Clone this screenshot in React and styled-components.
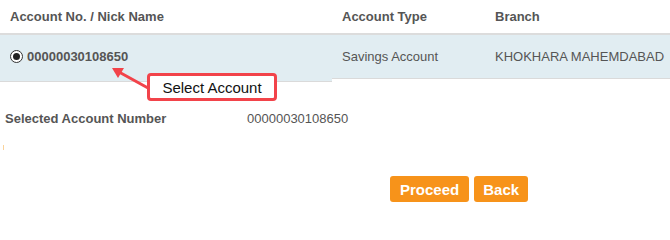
import * as React from 'react';
import styled, { createGlobalStyle } from 'styled-components';

const GlobalStyle = createGlobalStyle`
  body {
    margin: 0;
    background: #fff;
    font-family: "Liberation Sans", Arial, sans-serif;
  }
`;

const Page = styled.div`
  position: relative;
  width: 670px;
  height: 218px;
  overflow: hidden;
  color: #555;
  font-size: 13px;
`;

const Grid = styled.div`
  display: grid;
  grid-template-columns: 332px 153px 1fr;
`;

const HeadCell = styled.div`
  height: 33px;
  display: flex;
  align-items: center;
  padding-left: 10px;
  font-weight: bold;
  color: #555;
  border-bottom: 2px solid #dcdcdc;
`;

const BodyCell = styled.div`
  height: 43px;
  display: flex;
  align-items: center;
  padding-left: 10px;
  padding-bottom: ${(p) => (p.$raised ? '3px' : '0')};
  background: #e1edf2;
  border-bottom: 1px solid #dadada;
  font-weight: ${(p) => (p.$bold ? 'bold' : 'normal')};
  white-space: nowrap;
  overflow: hidden;
`;

const Radio = styled.span`
  width: 13px;
  height: 13px;
  border: 1px solid #333;
  border-radius: 50%;
  background: #fff;
  margin-right: 4px;
  display: inline-flex;
  align-items: center;
  justify-content: center;
  box-sizing: border-box;

  &::after {
    content: '';
    width: 7px;
    height: 7px;
    border-radius: 50%;
    background: #222;
  }
`;

const SummaryRow = styled.div`
  display: grid;
  grid-template-columns: 242px 1fr;
  padding: 29px 0 0 5px;
  line-height: 16px;
`;

const Label = styled.div`
  font-weight: bold;
`;

const Marker = styled.div`
  width: 1px;
  height: 5px;
  margin: 18px 0 0 3px;
  background: #fbd39a;
`;

const Actions = styled.div`
  display: flex;
  gap: 5px;
  padding: 26px 0 0 390px;
`;

const Button = styled.button`
  height: 26px;
  padding: 0 ${(p) => p.$pad || 10}px;
  border: none;
  border-radius: 3px;
  background: #f7931a;
  color: #fff;
  font-family: "Liberation Sans", Arial, sans-serif;
  font-weight: bold;
  font-size: 15px;
  cursor: pointer;
`;

const Callout = styled.div`
  position: absolute;
  left: 147px;
  top: 73px;
  width: 130px;
  height: 28px;
  box-sizing: border-box;
  border: 3px solid #f2434a;
  border-radius: 4px;
  background: #fff;
  color: #111;
  font-size: 15px;
  display: flex;
  align-items: center;
  justify-content: center;
`;

const Arrow = styled.svg`
  position: absolute;
  left: 108px;
  top: 62px;
`;

export default function App() {
  return (
    <Page>
      <GlobalStyle />
      <Grid>
        <HeadCell>Account No. / Nick Name</HeadCell>
        <HeadCell>Account Type</HeadCell>
        <HeadCell>Branch</HeadCell>
        <BodyCell $bold $raised>
          <Radio />
          00000030108650
        </BodyCell>
        <BodyCell>Savings Account</BodyCell>
        <BodyCell>KHOKHARA MAHEMDABAD</BodyCell>
      </Grid>
      <SummaryRow>
        <Label>Selected Account Number</Label>
        <div>00000030108650</div>
      </SummaryRow>
      <Marker />
      <Actions>
        <Button $pad={10}>Proceed</Button>
        <Button $pad={9}>Back</Button>
      </Actions>
      <Arrow width="44" height="32" viewBox="0 0 44 32">
        <line x1="40" y1="26" x2="11" y2="10" stroke="#f2434a" strokeWidth="3" strokeLinecap="round" />
        <polygon points="4,6 10,16 16,6" fill="#f2434a" />
      </Arrow>
      <Callout>Select Account</Callout>
    </Page>
  );
}
